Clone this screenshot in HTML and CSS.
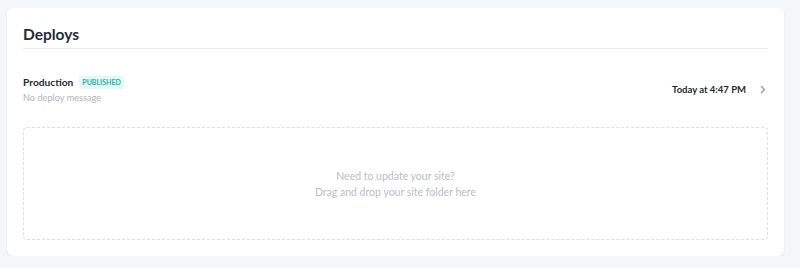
FILE: index.html
```html
<!DOCTYPE html>
<html lang="en">

<head>
    <meta charset="UTF-8">
    <meta name="viewport" content="width=device-width, initial-scale=1.0">
    <title>Deploys</title>
    <link rel="stylesheet" href="styles.css">
</head>

<body>
    <div class="card">
        <h2 class="card-title">Deploys</h2>

        <div class="deploy-row">
            <div class="deploy-info">
                <div class="deploy-name">
                    Production
                    <span class="badge">Published</span>
                </div>
                <div class="deploy-message">No deploy message</div>
            </div>
            <div class="deploy-time">
                Today at 4:47 PM
                <svg class="chevron" width="6" height="9" viewBox="0 0 6 9">
                    <path d="M1 1l3.5 3.5L1 8" fill="none" stroke="#9a9ea3" stroke-width="1.4" />
                </svg>
            </div>
        </div>

        <div class="dropzone">
            <p>Need to update your site?</p>
            <p>Drag and drop your site folder here</p>
        </div>
    </div>
</body>

</html>
```

FILE: styles.css
```css
/* General styles */
body {
    font-family: Lato, "Open Sans", sans-serif;
    background-color: #f5f6f7;
    margin: 0;
    padding: 8px 16px 0 7px;
    color: #1f2a33;
}

/* Card */
.card {
    background: #fff;
    width: 777px;
    box-sizing: border-box;
    padding: 15px 16px 16px;
    border-radius: 6px;
    box-shadow: 0 1px 2px rgba(0, 0, 0, 0.08);
}

.card-title {
    margin: 0;
    font-size: 15.5px;
    font-weight: 700;
    line-height: 22px;
    padding-bottom: 3px;
    border-bottom: 1px solid #ebedef;
    color: #222d38;
}

/* Deploy row */
.deploy-row {
    display: flex;
    justify-content: space-between;
    align-items: center;
    padding: 25px 0 22px;
}

.deploy-name {
    display: flex;
    align-items: center;
    font-size: 10.2px;
    font-weight: 700;
    line-height: 16px;
}

.badge {
    margin-left: 6px;
    padding: 0 3px;
    background: #e5f8f5;
    color: #25b3a0;
    font-size: 7px;
    font-weight: 700;
    text-transform: uppercase;
    line-height: 13px;
    border-radius: 2px;
}

.deploy-message {
    margin-top: 1px;
    font-size: 9.2px;
    color: #b1b5b9;
    line-height: 14px;
}

.deploy-time {
    display: flex;
    align-items: center;
    gap: 14px;
    font-size: 9.5px;
    font-weight: 700;
    padding-right: 2px;
}

/* Drop zone */
.dropzone {
    height: 111px;
    border: 1px dashed #dcdfe2;
    border-radius: 4px;
    display: flex;
    flex-direction: column;
    justify-content: center;
    align-items: center;
    color: #b9bdc1;
    font-size: 10.5px;
}

.dropzone p {
    margin: 0;
    line-height: 16px;
}
```
